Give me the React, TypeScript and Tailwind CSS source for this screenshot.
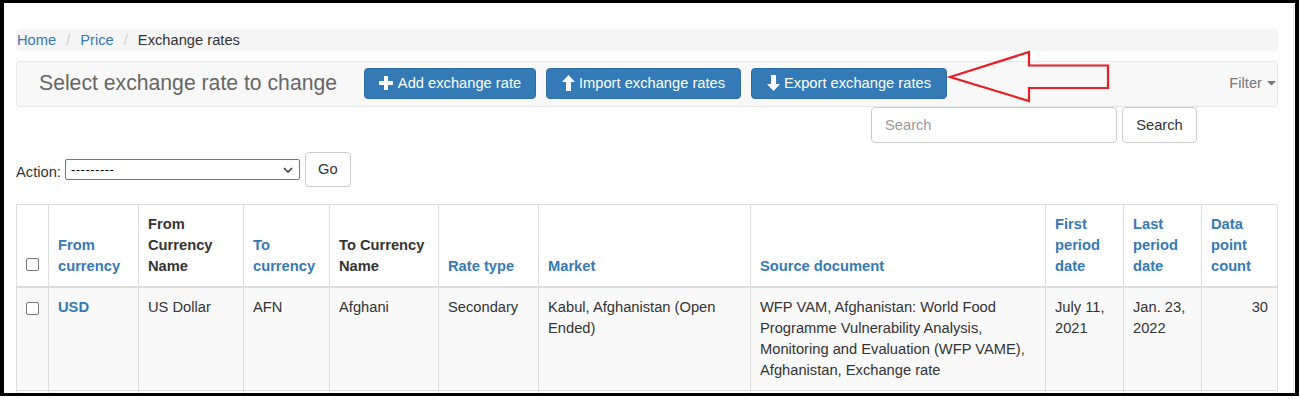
import React from "react";

const cols = "grid-cols-[32px_90px_105px_86px_109px_100px_212px_295px_78px_78px_76px]";

function Check() {
  return <div className="w-[13px] h-[13px] rounded-[2px] border border-[#767676] bg-white" />;
}

function PlusIcon() {
  return (
    <svg width="14" height="14" viewBox="0 0 14 14" className="shrink-0">
      <rect x="0" y="5" width="14" height="4" fill="white" />
      <rect x="5" y="0" width="4" height="14" fill="white" />
    </svg>
  );
}

function ArrowUp() {
  return (
    <svg width="13" height="16" viewBox="0 0 13 16" className="shrink-0">
      <polygon points="6.5,0 13,7 9,7 9,16 4,16 4,7 0,7" fill="white" />
    </svg>
  );
}

function ArrowDown() {
  return (
    <svg width="13" height="16" viewBox="0 0 13 16" className="shrink-0">
      <polygon points="4,0 9,0 9,9 13,9 6.5,16 0,9 4,9" fill="white" />
    </svg>
  );
}

export default function App() {
  const th = "border-r border-b border-[#ddd] px-[9px] py-[9px] flex items-end font-bold";
  const td = "border-r border-b border-[#ddd] px-[9px] py-[9px]";
  const empty = "border-r border-[#ddd] h-[30px]";
  return (
    <div className="relative w-[1300px] h-[399px] bg-white overflow-hidden font-['Liberation_Sans',Arial,sans-serif] text-[14.7px] leading-[21px] text-[#333]">
      <div className="w-[1299px] h-[396px] border-l-[4px] border-t-[3px] border-r-[4px] border-b-[3px] border-black overflow-hidden flex">
        <div className="w-[1289px] h-full shrink-0 pl-[12px] pt-[26px]">
          <div className="w-[1262px]">
            {/* breadcrumb */}
            <div className="h-[22px] bg-[#f5f5f5] rounded-[4px] flex items-center pl-[1px]">
              <span className="text-[#337ab7]">Home</span>
              <span className="text-[#ccc] mx-[10px]">/</span>
              <span className="text-[#337ab7]">Price</span>
              <span className="text-[#ccc] mx-[10px]">/</span>
              <span className="text-[#333]">Exchange rates</span>
            </div>
            {/* navbar */}
            <div className="mt-[10px] h-[46px] bg-[#f8f8f8] border border-[#e7e7e7] rounded-[4px] flex items-center pb-[2px]">
              <div className="w-[347px] pl-[22px] text-[21.2px] leading-[24px] text-[#666] whitespace-nowrap shrink-0">
                Select exchange rate to change
              </div>
              <div className="flex gap-[10px]">
                <div className="w-[172px] h-[31px] rounded-[4px] bg-[#337ab7] border border-[#2e6da4] text-white flex items-center justify-center gap-[5px]">
                  <PlusIcon />
                  <span>Add exchange rate</span>
                </div>
                <div className="w-[195px] h-[31px] rounded-[4px] bg-[#337ab7] border border-[#2e6da4] text-white flex items-center justify-center gap-[4px]">
                  <ArrowUp />
                  <span>Import exchange rates</span>
                </div>
                <div className="w-[196px] h-[31px] rounded-[4px] bg-[#337ab7] border border-[#2e6da4] text-white flex items-center justify-center gap-[4px]">
                  <ArrowDown />
                  <span>Export exchange rates</span>
                </div>
              </div>
              <div className="ml-auto pr-[1px] flex items-center gap-[5px] text-[#777]">
                <span>Filter</span>
                <svg width="9" height="5" viewBox="0 0 9 5">
                  <polygon points="0,0 9,0 4.5,4.5" fill="#777" />
                </svg>
              </div>
            </div>
            {/* search */}
            <div className="flex ml-[855px] gap-[5px]">
              <div className="w-[246px] h-[36px] border border-[#ccc] rounded-[4px] bg-white flex items-center pl-[13px] text-[#999]">
                Search
              </div>
              <div className="w-[75px] h-[36px] border border-[#ccc] rounded-[4px] bg-white flex items-center justify-center text-[#333]">
                Search
              </div>
            </div>
            {/* action */}
            <div className="mt-[9px] flex items-center">
              <span className="pt-[6px] text-[#333]">Action:</span>
              <div className="ml-[4px] w-[235px] h-[21px] border border-[#767676] rounded-[2px] bg-white flex items-center pl-[5px] pr-[6px] text-[13px] leading-[16px] text-black">
                <span className="tracking-[0.5px]">---------</span>
                <svg className="ml-auto" width="10" height="6" viewBox="0 0 10 6">
                  <polyline points="1,1 5,5 9,1" fill="none" stroke="#333" strokeWidth="1.5" />
                </svg>
              </div>
              <div className="ml-[5px] w-[46px] h-[35px] border border-[#ccc] rounded-[4px] bg-white flex items-center justify-center">
                Go
              </div>
            </div>
            {/* table */}
            <div className={`mt-[17px] grid ${cols} border-l border-t border-[#ddd]`}>
              <div className={`${th} border-b-2 pb-[15px]`}><Check /></div>
              <div className={`${th} border-b-2 text-[#337ab7]`}>From currency</div>
              <div className={`${th} border-b-2`}>From Currency Name</div>
              <div className={`${th} border-b-2 text-[#337ab7]`}>To currency</div>
              <div className={`${th} border-b-2`}>To Currency Name</div>
              <div className={`${th} border-b-2 text-[#337ab7]`}>Rate type</div>
              <div className={`${th} border-b-2 text-[#337ab7]`}>Market</div>
              <div className={`${th} border-b-2 text-[#337ab7]`}>Source document</div>
              <div className={`${th} border-b-2 text-[#337ab7]`}>First period date</div>
              <div className={`${th} border-b-2 text-[#337ab7]`}>Last period date</div>
              <div className={`${th} border-b-2 text-[#337ab7]`}>Data point count</div>

              <div className={`${td} bg-[#f9f9f9] pt-[14px]`}><Check /></div>
              <div className={`${td} bg-[#f9f9f9] font-bold text-[#337ab7]`}>USD</div>
              <div className={`${td} bg-[#f9f9f9]`}>US Dollar</div>
              <div className={`${td} bg-[#f9f9f9]`}>AFN</div>
              <div className={`${td} bg-[#f9f9f9]`}>Afghani</div>
              <div className={`${td} bg-[#f9f9f9]`}>Secondary</div>
              <div className={`${td} bg-[#f9f9f9]`}>Kabul, Afghanistan (Open Ended)</div>
              <div className={`${td} bg-[#f9f9f9]`}>WFP VAM, Afghanistan: World Food Programme Vulnerability Analysis, Monitoring and Evaluation (WFP VAME), Afghanistan, Exchange rate</div>
              <div className={`${td} bg-[#f9f9f9]`}>July 11, 2021</div>
              <div className={`${td} bg-[#f9f9f9]`}>Jan. 23, 2022</div>
              <div className={`${td} bg-[#f9f9f9] text-right`}>30</div>

              <div className={empty} />
              <div className={empty} />
              <div className={empty} />
              <div className={empty} />
              <div className={empty} />
              <div className={empty} />
              <div className={empty} />
              <div className={empty} />
              <div className={empty} />
              <div className={empty} />
              <div className={empty} />
            </div>
          </div>
        </div>
        <div className="w-[1px] h-full bg-[#e3e3e3] shrink-0" />
        <div className="w-[1px] h-full bg-white shrink-0" />
      </div>
      <svg className="absolute left-0 top-0 pointer-events-none" width="1300" height="399" viewBox="0 0 1300 399">
        <polygon
          points="950,77 1029,52 1029,65.5 1108,65.5 1108,88 1029,88 1029,101"
          fill="none"
          stroke="#ea1c24"
          strokeWidth="2.2"
          strokeLinejoin="miter"
        />
      </svg>
    </div>
  );
}
